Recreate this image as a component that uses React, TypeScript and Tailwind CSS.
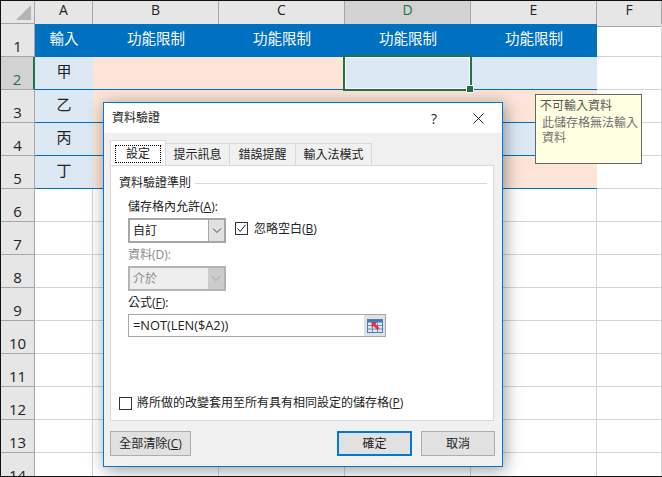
const cols = ['A', 'B', 'C', 'D', 'E', 'F'];
const blue = 'bg-[#dce9f5]';
const peach = 'bg-[#fce4d6]';

// fills per data row, B..E
const dataRows = [
  { row: 2, label: '甲', fills: [peach, peach, blue, blue] },
  { row: 3, label: '乙', fills: [peach, peach, peach, peach] },
  { row: 4, label: '丙', fills: [peach, peach, blue, blue] },
  { row: 5, label: '丁', fills: [peach, peach, peach, peach] },
];
const emptyRows = [6, 7, 8, 9, 10, 11, 12, 13, 14];

function RowHead({ n, active }: { n: number; active?: boolean }) {
  return (
    <div
      className={`h-[33px] flex items-end justify-center text-[15px] leading-[20px] border-b border-r border-b-[#a6a6a6] ${
        active ? 'bg-[#d2d2d2] text-[#217346] border-r-[#217346] border-r-2' : 'bg-[#e6e6e6] text-[#222] border-r-[#a6a6a6]'
      }`}
    >
      {n}
    </div>
  );
}

function Tab({ label, width, active }: { label: string; width: string; active?: boolean }) {
  if (active) {
    return (
      <div className={`${width} h-[25px] -mt-[2px] bg-white border border-b-0 border-[#d9d9d9] p-[4px] pb-[2px] relative z-10`}>
        <div className="h-full border border-dotted border-black flex items-center justify-center">{label}</div>
      </div>
    );
  }
  return (
    <div className={`${width} h-[22px] bg-[#f0f0f0] border border-b-0 border-l-0 border-[#d9d9d9] flex items-center justify-center`}>
      {label}
    </div>
  );
}

function Chevron({ color }: { color: string }) {
  return (
    <svg width="10" height="6" viewBox="0 0 10 6" fill="none" stroke={color} strokeWidth="1">
      <path d="M1 .5 5 4.5 9 .5" />
    </svg>
  );
}

function Checkbox({ checked }: { checked?: boolean }) {
  return (
    <div className="w-[13px] h-[13px] border border-[#333] bg-white shrink-0 flex items-center justify-center">
      {checked && (
        <svg width="11" height="11" viewBox="0 0 11 11" fill="none" stroke="#222" strokeWidth="1">
          <path d="M1.5 5.5 4.2 8.5 9.5 1.8" />
        </svg>
      )}
    </div>
  );
}

function RefIcon() {
  return (
    <svg width="16" height="14" viewBox="0 0 16 14">
      <rect x="0.5" y="0.5" width="15" height="13" fill="#dfe8f3" stroke="#4a7fb5" />
      <rect x="1" y="1" width="14" height="2.5" fill="#3f78b8" />
      <path d="M1 6.5h14M1 10h14M5.5 3.5V13M10.5 3.5V13" stroke="#5f8fc0" strokeWidth="1" />
      <path d="M4.5 3 10 3 8.5 5 12.5 9 10.5 11 6.5 7 4.5 8.5Z" fill="#e0303a" />
    </svg>
  );
}

function DlgButton({ children, primary }: { children: React.ReactNode; primary?: boolean }) {
  return (
    <div
      className={`h-[25px] bg-[#e1e1e1] flex items-center justify-center ${
        primary ? 'w-[75px] border-2 border-[#0078d7]' : 'w-[74px] border border-[#adadad]'
      }`}
    >
      {children}
    </div>
  );
}

export default function App() {
  return (
    <div className="relative w-[662px] h-[477px] overflow-hidden bg-white border-t border-l border-b border-[#111] font-['Open_Sans','Noto_Sans_CJK_TC',sans-serif] text-[#222]">
      {/* 工作表 */}
      <div className="grid grid-cols-[34px_58px_126px_126px_126px_126px_1fr]">
        {/* 欄標題 */}
        <div className="h-[22px] box-content bg-[#e6e6e6] border-b border-r border-[#a6a6a6] relative">
          <svg className="absolute right-[3px] bottom-[3px]" width="15" height="15" viewBox="0 0 15 15">
            <path d="M15 0V15H0Z" fill="#b4b4b4" />
          </svg>
        </div>
        {cols.map((c) => (
          <div
            key={c}
            className={`h-[22px] box-content border-b border-r text-[14px] pb-[3px] -mb-[3px] flex items-start leading-[18px] justify-center ${
              c === 'D'
                ? 'bg-[#d2d2d2] text-[#217346] border-b-[#217346] border-r-[#a6a6a6]'
                : 'bg-[#e6e6e6] border-[#a6a6a6]'
            }`}
          >
            {c}
          </div>
        ))}

        {/* 第一列 */}
        <RowHead n={1} />
        {['輸入', '功能限制', '功能限制', '功能限制', '功能限制'].map((t, i) => (
          <div key={i} className="h-[33px] bg-[#0070c0] text-white text-[14.5px] flex items-start pt-[4px] justify-center">
            {t}
          </div>
        ))}
        <div className="h-[33px] border-b border-r border-[#d4d4d4]" />

        {dataRows.map((r) => (
          <div key={r.row} className="contents">
            <RowHead n={r.row} active={r.row === 2} />
            <div className={`h-[33px] ${blue} border-b border-[#0070c0] flex items-start pt-[3px] justify-center text-[15px]`}>
              {r.label}
            </div>
            {r.fills.map((f, i) => (
              <div key={i} className={`h-[33px] ${f} border-b border-[#0070c0] relative`}>
                {r.row === 2 && i === 2 && (
                  <div className="absolute -left-[2px] -top-[2px] w-[129px] h-[36px] border-2 border-[#217346] z-10">
                    <div className="w-full h-full border border-white" />
                    <div className="absolute -right-[4px] -bottom-[4px] w-[6px] h-[6px] bg-[#217346] border border-white box-content" />
                  </div>
                )}
              </div>
            ))}
            <div className="h-[33px] border-b border-r border-[#d4d4d4]" />
          </div>
        ))}

        {emptyRows.map((n) => (
          <div key={n} className="contents">
            <RowHead n={n} />
            {cols.map((c) => (
              <div key={c} className="h-[33px] border-b border-r border-[#d4d4d4]" />
            ))}
          </div>
        ))}
      </div>

      {/* 註解方塊 */}
      <div className="absolute left-[534px] top-[93px] w-[107px] h-[70px] bg-[#ffffe1] border border-[#666] pl-[4px] pt-[3px] text-[12px] leading-[15px] text-[#555] z-20">
        <div>不可輸入資料</div>
        <div className="pl-[2px] pt-[2px] text-[#6f6f6f]">此儲存格無法輸入資料</div>
      </div>

      {/* 資料驗證對話框 */}
      <div className="absolute left-[102px] top-[101px] w-[400px] h-[365px] z-30 flex flex-col bg-[#f0f0f0] border border-[#0078d7] text-[12px] shadow-[2px_3px_16px_rgba(0,0,0,0.4)]">
        <div className="h-[30px] shrink-0 bg-white flex items-center pl-[8px] pr-[18px]">
          <span className="text-[12px]">資料驗證</span>
          <span className="ml-auto mr-[36px] text-[14px]">?</span>
          <svg width="11" height="11" viewBox="0 0 11 11" stroke="#222" strokeWidth="1">
            <path d="M.5.5 10.5 10.5M10.5.5.5 10.5" />
          </svg>
        </div>

        <div className="flex-1 flex flex-col px-[6px] pb-[9px]">
          <div className="flex items-end h-[32px] shrink-0">
            <Tab label="設定" width="w-[56px]" active />
            <Tab label="提示訊息" width="w-[64px]" />
            <Tab label="錯誤提醒" width="w-[66px]" />
            <Tab label="輸入法模式" width="w-[76px]" />
          </div>

          <div className="w-[384px] h-[256px] bg-white border border-[#d9d9d9] flex flex-col pl-[8px] pr-[6px] pt-[9px]">
            <div className="flex items-center gap-[4px] h-[16px]">
              <span>資料驗證準則</span>
              <div className="flex-1 h-px bg-[#d9d9d9]" />
            </div>

            <div className="pl-[9px] flex flex-col">
              <div className="h-[16px] mt-[8px] leading-[16px]">
                儲存格內允許(<u>A</u>):
              </div>
              <div className="flex mt-[3px]">
                <div className="w-[98px] h-[25px] border-2 border-[#a6a6a6] flex bg-white">
                  <div className="flex-1 pl-[3px] flex items-center">自訂</div>
                  <div className="w-[16px] bg-[#e1e1e1] border-l border-[#a6a6a6] flex items-center justify-center">
                    <Chevron color="#444" />
                  </div>
                </div>
                <div className="ml-[9px] mt-[4px] flex items-start gap-[6px]">
                  <Checkbox checked />
                  <span className="leading-[13px]">
                    忽略空白(<u>B</u>)
                  </span>
                </div>
              </div>

              <div className="h-[16px] mt-[4px] leading-[16px] text-[#8a8a8a]">資料(D):</div>
              <div className="w-[98px] h-[25px] mt-[3px] border-2 border-[#b4b4b4] flex bg-[#eeeeee] text-[#8a8a8a]">
                <div className="flex-1 pl-[3px] flex items-center">介於</div>
                <div className="w-[16px] bg-[#cccccc] flex items-center justify-center">
                  <Chevron color="#9a9a9a" />
                </div>
              </div>

              <div className="h-[16px] mt-[4px] leading-[16px]">
                公式(<u>F</u>):
              </div>
              <div className="w-[258px] h-[23px] mt-[3px] flex border border-[#a6a6a6] border-r-0">
                <div className="flex-1 bg-white pl-[4px] flex items-center text-[12.8px]">=NOT(LEN($A2))</div>
                <div className="w-[22px] bg-[#e1e1e1] border border-y-0 border-l-0 border-[#a6a6a6] flex items-center justify-center">
                  <RefIcon />
                </div>
              </div>
            </div>

            <div className="mt-auto mb-[8px] flex items-center gap-[5px]">
              <Checkbox />
              <span>
                將所做的改變套用至所有具有相同設定的儲存格(<u>P</u>)
              </span>
            </div>
          </div>

          <div className="flex mt-[10px]">
            <div className="w-[81px] h-[25px] bg-[#e1e1e1] border border-[#adadad] flex items-center justify-center">
              全部清除(<u>C</u>)
            </div>
            <div className="ml-auto flex gap-[9px] mr-[1px]">
              <DlgButton primary>確定</DlgButton>
              <DlgButton>取消</DlgButton>
            </div>
          </div>
        </div>
      </div>
    </div>
  );
}
